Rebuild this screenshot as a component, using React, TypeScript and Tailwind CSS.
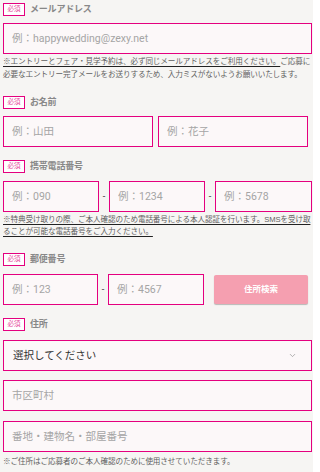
import { ChevronDown } from 'lucide-react';

const font = { fontFamily: '"Liberation Sans", "Noto Sans CJK JP", sans-serif' };
const inputFont = { fontFamily: 'Roboto, "Noto Sans CJK JP", sans-serif' };

const Badge = () => (
    <span className="flex items-center justify-center w-[22px] h-[13px] border border-[#e4007f] bg-white text-[6.5px] leading-none text-[#e6479c]">
        必須
    </span>
);

const Label = ({ children }: any) => (
    <div className="flex items-center gap-[5px] h-[13px]">
        <Badge />
        <span className="text-[9px] font-bold text-[#888] tracking-[-0.2px]">{children}</span>
    </div>
);

const Field = ({ placeholder, className = '' }: any) => (
    <input
        placeholder={placeholder}
        style={inputFont}
        className={
            'h-[31px] w-0 min-w-0 border border-[#e4007f] bg-[#fcf8f9] px-[8px] text-[10.5px] text-[#333] outline-none placeholder:text-[#a5a5a5] ' +
            className
        }
    />
);

const Dash = () => <span className="w-[10px] shrink-0 text-center text-[9px] text-[#333]">-</span>;

export default function App() {
    return (
        <div style={font} className="w-[313px] h-[472px] overflow-hidden bg-[#f6f5f3] pl-[3px] pr-[1px] pt-[3px]">
            <Label>メールアドレス</Label>
            <div className="mt-[7px] flex">
                <Field placeholder="例：happywedding@zexy.net" className="flex-1" />
            </div>
            <p className="mt-[2px] text-[7.6px] leading-[12.5px] text-[#5f5f5f] whitespace-nowrap tracking-[-0.1px]">
                <span className="underline underline-offset-2 decoration-[#222]">
                    ※エントリーとフェア・見学予約は、必ず同じメールアドレスをご利用ください。
                </span>
                ご応募に
                <br />
                必要なエントリー完了メールをお送りするため、入力ミスがないようお願いいたします。
            </p>

            <div className="mt-[15px]">
                <Label>お名前</Label>
            </div>
            <div className="mt-[7px] flex gap-[5px] pr-[4px]">
                <Field placeholder="例：山田" className="flex-1" />
                <Field placeholder="例：花子" className="flex-1" />
            </div>

            <div className="mt-[13px]">
                <Label>携帯電話番号</Label>
            </div>
            <div className="mt-[8px] flex items-center">
                <Field placeholder="例：090" className="w-[96px] shrink-0" />
                <Dash />
                <Field placeholder="例：1234" className="w-[96px] shrink-0" />
                <Dash />
                <Field placeholder="例：5678" className="flex-1" />
            </div>
            <p className="mt-[2px] text-[7.6px] leading-[12px] text-[#5f5f5f] whitespace-nowrap tracking-[-0.1px] underline underline-offset-2 decoration-[#222]">
                ※特典受け取りの際、ご本人確認のため電話番号による本人認証を行います。SMSを受け取
                <br />
                ることが可能な電話番号をご入力ください。
            </p>

            <div className="mt-[15px]">
                <Label>郵便番号</Label>
            </div>
            <div className="mt-[8px] flex items-center pr-[4px]">
                <Field placeholder="例：123" className="w-[95px] shrink-0" />
                <Dash />
                <Field placeholder="例：4567" className="w-[96px] shrink-0" />
                <span className="w-[10px] shrink-0" />
                <button className="flex-1 h-[29px] rounded-[2px] bg-[#f59fb0] text-[8.5px] font-bold text-white shadow-[0_1px_1px_rgba(0,0,0,0.25)]">
                    住所検索
                </button>
            </div>

            <div className="mt-[13px]">
                <Label>住所</Label>
            </div>
            <div className="mt-[9px] flex h-[31px] items-center justify-between border border-[#e4007f] bg-[#fcf8f9] pl-[9px] pr-[14px]">
                <span className="text-[10.5px] text-[#333]">選択してください</span>
                <ChevronDown className="w-[9px] h-[9px] text-[#999]" strokeWidth={2} />
            </div>
            <div className="mt-[9px] flex">
                <Field placeholder="市区町村" className="flex-1" />
            </div>
            <div className="mt-[10px] flex">
                <Field placeholder="番地・建物名・部屋番号" className="flex-1" />
            </div>
            <p className="mt-[4px] text-[7.6px] leading-[12px] text-[#5f5f5f] whitespace-nowrap tracking-[-0.1px]">
                ※ご住所はご応募者のご本人確認のために使用させていただきます。
            </p>
        </div>
    );
}
